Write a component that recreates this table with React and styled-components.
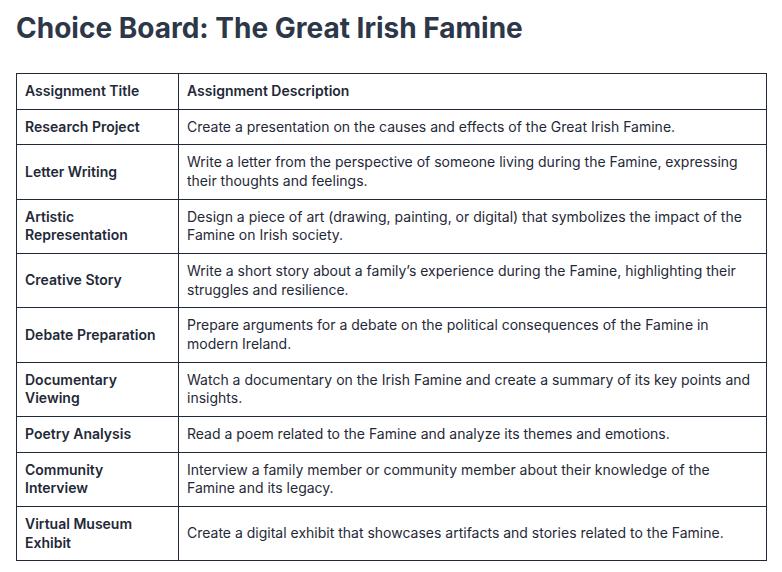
import React from "react"
import styled, { createGlobalStyle } from "styled-components"

const GlobalStyle = createGlobalStyle`
	body {
		margin: 0;
		background: #ffffff;
		font-family: Inter, "Noto Sans", sans-serif;
		color: #1f2937;
	}
`

const Page = styled.div`
	padding: 10px 16px 16px 16px;
`

const Title = styled.h1`
	margin: 0 0 27px 0;
	font-size: 28px;
	font-weight: 700;
	line-height: 36px;
	color: #2d3748;
`

const Board = styled.table`
	width: 751px;
	border-collapse: collapse;
	font-size: 14px;
	line-height: 18.65px;
	color: #1f2937;
`

const Cell = styled.td`
	border: 1px solid #1f2937;
	padding: ${(props) => (props.narrow ? "8px 16px 8px 8px" : "8px")};
	vertical-align: middle;
	text-align: left;
	font-weight: ${(props) => (props.bold ? 600 : 400)};
	width: ${(props) => (props.narrow ? "137px" : "auto")};
`

const HeadCell = styled(Cell).attrs({ as: "th" })`
	font-weight: 600;
`

const assignments = [
	["Research Project", "Create a presentation on the causes and effects of the Great Irish Famine."],
	["Letter Writing", "Write a letter from the perspective of someone living during the Famine, expressing their thoughts and feelings."],
	["Artistic Representation", "Design a piece of art (drawing, painting, or digital) that symbolizes the impact of the Famine on Irish society."],
	["Creative Story", "Write a short story about a family\u2019s experience during the Famine, highlighting their struggles and resilience."],
	["Debate Preparation", "Prepare arguments for a debate on the political consequences of the Famine in modern Ireland."],
	["Documentary Viewing", "Watch a documentary on the Irish Famine and create a summary of its key points and insights."],
	["Poetry Analysis", "Read a poem related to the Famine and analyze its themes and emotions."],
	["Community Interview", "Interview a family member or community member about their knowledge of the Famine and its legacy."],
	["Virtual Museum Exhibit", "Create a digital exhibit that showcases artifacts and stories related to the Famine."],
]

export default function App() {
	return (
		<Page>
			<GlobalStyle />
			<Title>Choice Board: The Great Irish Famine</Title>
			<Board>
				<thead>
					<tr>
						<HeadCell narrow>Assignment Title</HeadCell>
						<HeadCell>Assignment Description</HeadCell>
					</tr>
				</thead>
				<tbody>
					{assignments.map(([title, description]) => (
						<tr key={title}>
							<Cell bold narrow>
								{title}
							</Cell>
							<Cell>{description}</Cell>
						</tr>
					))}
				</tbody>
			</Board>
		</Page>
	)
}
